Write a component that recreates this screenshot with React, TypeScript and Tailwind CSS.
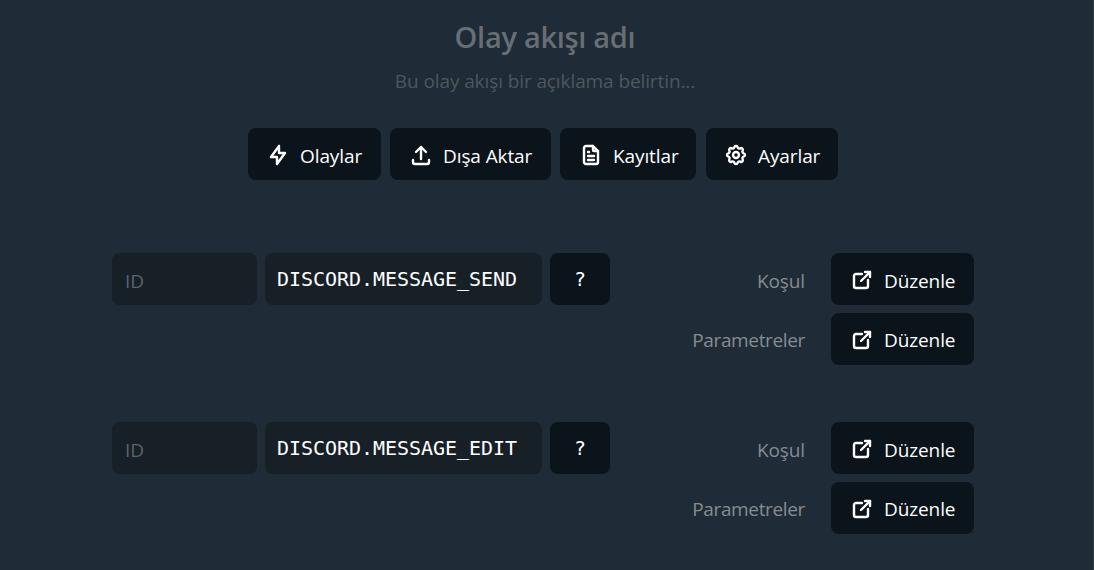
import { TbBolt, TbUpload, TbFileText, TbSettings, TbExternalLink } from "react-icons/tb";
import type { IconType } from "react-icons";

type ButtonProps = { icon: IconType; label: string; className: string; labelClassName?: string };

function Button({ icon: Icon, label, className, labelClassName = "mt-px" }: ButtonProps) {
  return (
    <button className={`flex h-[52px] items-center gap-[10px] rounded-lg bg-[#0b131b] pt-[2px] whitespace-nowrap text-white ${className}`}>
      <Icon className="size-6 shrink-0 stroke-[2.4]" />
      <span className={`tracking-[-0.1px] ${labelClassName}`}>{label}</span>
    </button>
  );
}

function EventRow({ name }: { name: string }) {
  return (
    <section className="flex h-28 justify-between">
      <div className="flex gap-2">
        <input
          placeholder="ID"
          className="h-[52px] w-[145px] rounded-lg bg-[#171f27] px-[13px] pt-1 placeholder:text-[#5d6368]"
        />
        <div className="flex h-[52px] w-[277px] items-center rounded-lg bg-[#171f27] px-3 font-['DejaVu_Sans_Mono',monospace] text-[20px] tracking-[-0.04px] text-white">
          {name}
        </div>
        <button className="h-[52px] w-[60px] rounded-lg bg-[#0b131b] font-['DejaVu_Sans_Mono',monospace] text-[20px] text-white">
          ?
        </button>
      </div>
      <div className="flex flex-col gap-2">
        <div className="flex items-center justify-end gap-[26px]">
          <span className="mt-[3px] tracking-[-0.1px] text-[#868c92]">Koşul</span>
          <Button icon={TbExternalLink} label="Düzenle" className="w-[143px] pl-[19px]" />
        </div>
        <div className="flex items-center justify-end gap-[26px]">
          <span className="mt-px tracking-[-0.35px] text-[#868c92]">Parametreler</span>
          <Button icon={TbExternalLink} label="Düzenle" className="w-[143px] pl-[19px]" labelClassName="-mt-px" />
        </div>
      </div>
    </section>
  );
}

export default function App() {
  return (
    <main className="h-[570px] overflow-hidden border-r border-[#35404a] bg-[#1f2b36] font-['Open_Sans','Noto_Sans',sans-serif] text-[19px] leading-7">
      <header className="flex flex-col items-center pt-[17px] pr-[3px]">
        <h1 className="text-[29px] leading-10 font-semibold tracking-[-0.3px] text-[#686e75]">Olay akışı adı</h1>
        <p className="mt-[10px] tracking-[-0.1px] text-[#4f575e]">Bu olay akışı bir açıklama belirtin...</p>
      </header>
      <nav className="mt-[33px] ml-[248px] flex gap-[9px]">
        <Button icon={TbBolt} label="Olaylar" className="w-[133px] pl-[18px]" />
        <Button icon={TbUpload} label="Dışa Aktar" className="w-[161px] pl-[19px]" />
        <Button icon={TbFileText} label="Kayıtlar" className="mr-px w-[136px] pl-[19px]" />
        <Button icon={TbSettings} label="Ayarlar" className="w-[132px] pl-[18px]" />
      </nav>
      <div className="mt-[73px] ml-28 flex w-[862px] flex-col gap-[57px]">
        <EventRow name="DISCORD.MESSAGE_SEND" />
        <EventRow name="DISCORD.MESSAGE_EDIT" />
      </div>
    </main>
  );
}
